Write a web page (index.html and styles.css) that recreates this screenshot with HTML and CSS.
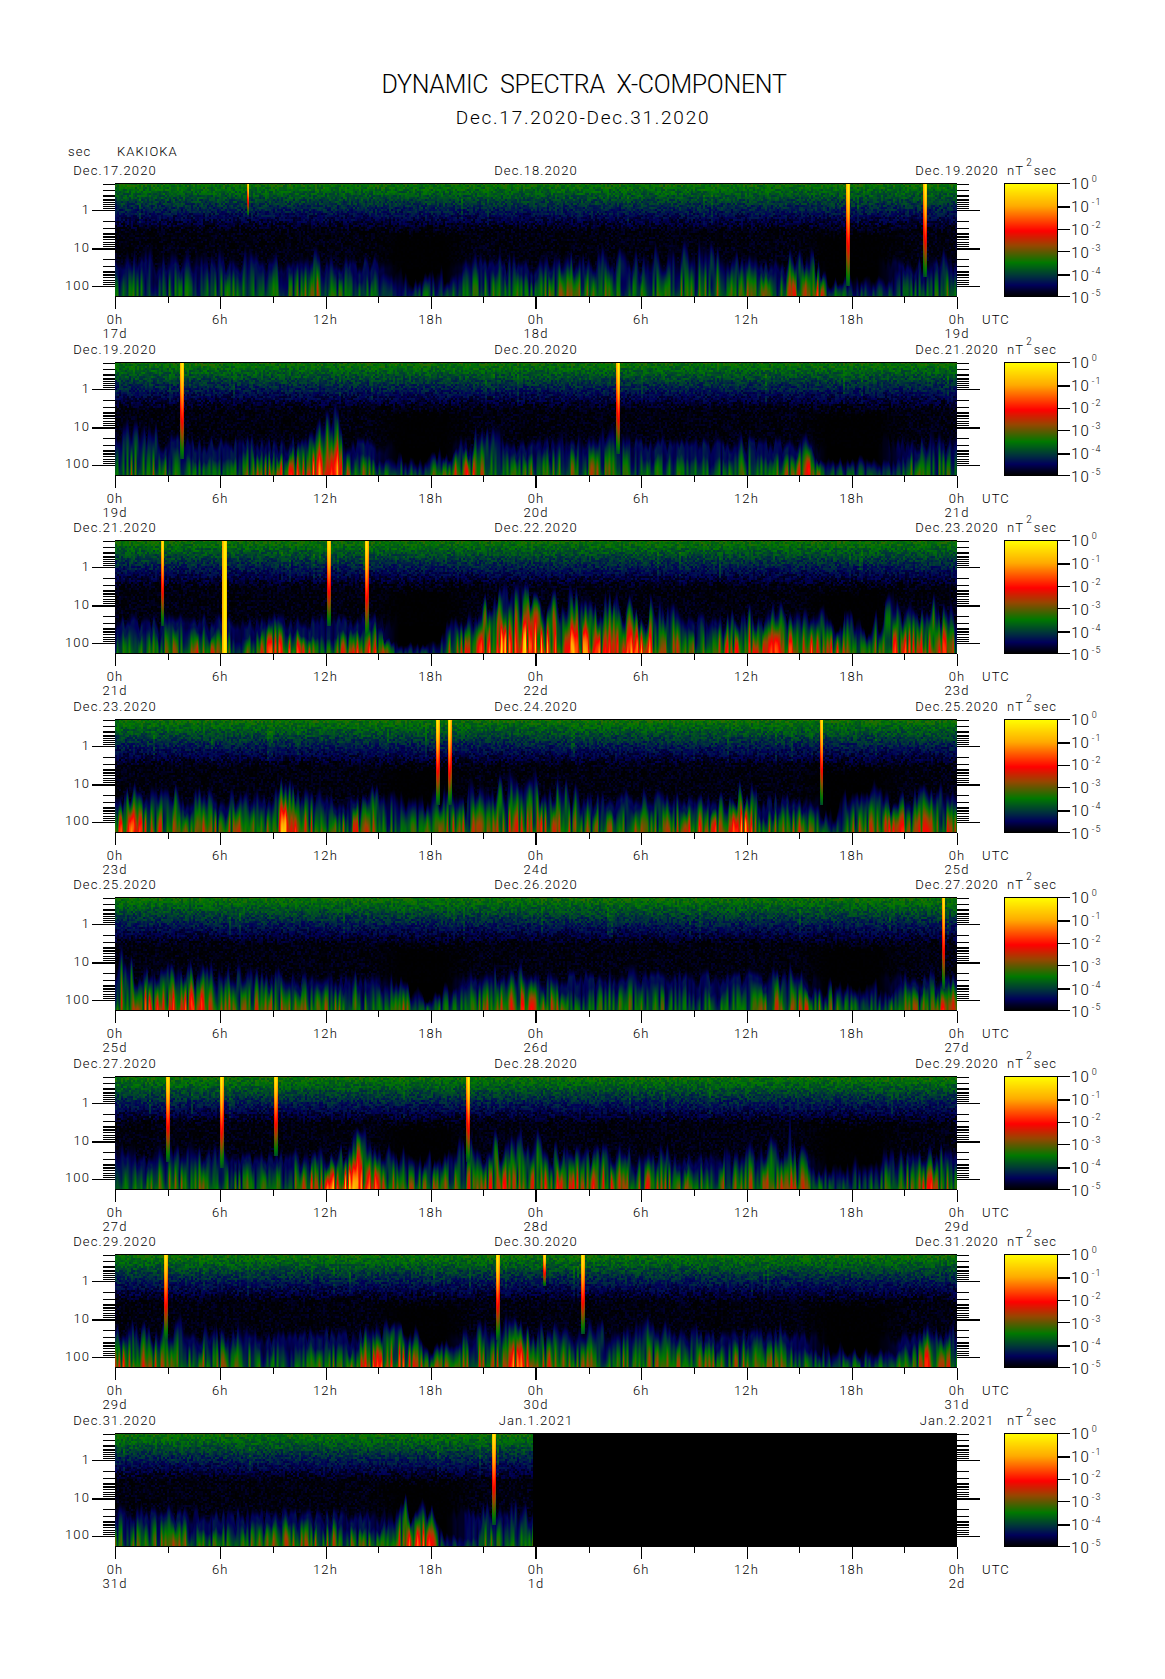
FILE: index.html
```html
<!DOCTYPE html>
<html>
<head>
    <title>Dynamic Spectra X-Component</title>
    <link rel="stylesheet" href="styles.css">
</head>
<body>
    <h1 class="title">DYNAMIC SPECTRA X-COMPONENT</h1>
    <h2 class="subtitle">Dec.17.2020-Dec.31.2020</h2>
    <div class="station"><span class="sec">sec</span><span>KAKIOKA</span></div>

    <section class="panel">
        <div class="dates"><span>Dec.17.2020</span><span>Dec.18.2020</span><span>Dec.19.2020</span><span class="units">nT<sup>2</sup>sec</span></div>
        <div class="plot-row">
            <div class="y-labels"><span>1</span><span>10</span><span>100</span></div>
            <canvas class="ticks-left" width="23" height="114"></canvas>
            <canvas class="spectrum" width="842" height="114"></canvas>
            <canvas class="ticks-right" width="23" height="114"></canvas>
            <canvas class="colorbar" width="66" height="114"></canvas>
            <div class="scale"><span>10<sup>0</sup></span><span>10<sup>-1</sup></span><span>10<sup>-2</sup></span><span>10<sup>-3</sup></span><span>10<sup>-4</sup></span><span>10<sup>-5</sup></span></div>
        </div>
        <canvas class="ticks-bottom" width="844" height="12"></canvas>
        <div class="hours"><span>0h</span><span>6h</span><span>12h</span><span>18h</span><span>0h</span><span>6h</span><span>12h</span><span>18h</span><span>0h</span><span class="utc">UTC</span></div>
        <div class="days"><span>17d</span><span>18d</span><span>19d</span></div>
    </section>

    <section class="panel">
        <div class="dates"><span>Dec.19.2020</span><span>Dec.20.2020</span><span>Dec.21.2020</span><span class="units">nT<sup>2</sup>sec</span></div>
        <div class="plot-row">
            <div class="y-labels"><span>1</span><span>10</span><span>100</span></div>
            <canvas class="ticks-left" width="23" height="114"></canvas>
            <canvas class="spectrum" width="842" height="114"></canvas>
            <canvas class="ticks-right" width="23" height="114"></canvas>
            <canvas class="colorbar" width="66" height="114"></canvas>
            <div class="scale"><span>10<sup>0</sup></span><span>10<sup>-1</sup></span><span>10<sup>-2</sup></span><span>10<sup>-3</sup></span><span>10<sup>-4</sup></span><span>10<sup>-5</sup></span></div>
        </div>
        <canvas class="ticks-bottom" width="844" height="12"></canvas>
        <div class="hours"><span>0h</span><span>6h</span><span>12h</span><span>18h</span><span>0h</span><span>6h</span><span>12h</span><span>18h</span><span>0h</span><span class="utc">UTC</span></div>
        <div class="days"><span>19d</span><span>20d</span><span>21d</span></div>
    </section>

    <section class="panel">
        <div class="dates"><span>Dec.21.2020</span><span>Dec.22.2020</span><span>Dec.23.2020</span><span class="units">nT<sup>2</sup>sec</span></div>
        <div class="plot-row">
            <div class="y-labels"><span>1</span><span>10</span><span>100</span></div>
            <canvas class="ticks-left" width="23" height="114"></canvas>
            <canvas class="spectrum" width="842" height="114"></canvas>
            <canvas class="ticks-right" width="23" height="114"></canvas>
            <canvas class="colorbar" width="66" height="114"></canvas>
            <div class="scale"><span>10<sup>0</sup></span><span>10<sup>-1</sup></span><span>10<sup>-2</sup></span><span>10<sup>-3</sup></span><span>10<sup>-4</sup></span><span>10<sup>-5</sup></span></div>
        </div>
        <canvas class="ticks-bottom" width="844" height="12"></canvas>
        <div class="hours"><span>0h</span><span>6h</span><span>12h</span><span>18h</span><span>0h</span><span>6h</span><span>12h</span><span>18h</span><span>0h</span><span class="utc">UTC</span></div>
        <div class="days"><span>21d</span><span>22d</span><span>23d</span></div>
    </section>

    <section class="panel">
        <div class="dates"><span>Dec.23.2020</span><span>Dec.24.2020</span><span>Dec.25.2020</span><span class="units">nT<sup>2</sup>sec</span></div>
        <div class="plot-row">
            <div class="y-labels"><span>1</span><span>10</span><span>100</span></div>
            <canvas class="ticks-left" width="23" height="114"></canvas>
            <canvas class="spectrum" width="842" height="114"></canvas>
            <canvas class="ticks-right" width="23" height="114"></canvas>
            <canvas class="colorbar" width="66" height="114"></canvas>
            <div class="scale"><span>10<sup>0</sup></span><span>10<sup>-1</sup></span><span>10<sup>-2</sup></span><span>10<sup>-3</sup></span><span>10<sup>-4</sup></span><span>10<sup>-5</sup></span></div>
        </div>
        <canvas class="ticks-bottom" width="844" height="12"></canvas>
        <div class="hours"><span>0h</span><span>6h</span><span>12h</span><span>18h</span><span>0h</span><span>6h</span><span>12h</span><span>18h</span><span>0h</span><span class="utc">UTC</span></div>
        <div class="days"><span>23d</span><span>24d</span><span>25d</span></div>
    </section>

    <section class="panel">
        <div class="dates"><span>Dec.25.2020</span><span>Dec.26.2020</span><span>Dec.27.2020</span><span class="units">nT<sup>2</sup>sec</span></div>
        <div class="plot-row">
            <div class="y-labels"><span>1</span><span>10</span><span>100</span></div>
            <canvas class="ticks-left" width="23" height="114"></canvas>
            <canvas class="spectrum" width="842" height="114"></canvas>
            <canvas class="ticks-right" width="23" height="114"></canvas>
            <canvas class="colorbar" width="66" height="114"></canvas>
            <div class="scale"><span>10<sup>0</sup></span><span>10<sup>-1</sup></span><span>10<sup>-2</sup></span><span>10<sup>-3</sup></span><span>10<sup>-4</sup></span><span>10<sup>-5</sup></span></div>
        </div>
        <canvas class="ticks-bottom" width="844" height="12"></canvas>
        <div class="hours"><span>0h</span><span>6h</span><span>12h</span><span>18h</span><span>0h</span><span>6h</span><span>12h</span><span>18h</span><span>0h</span><span class="utc">UTC</span></div>
        <div class="days"><span>25d</span><span>26d</span><span>27d</span></div>
    </section>

    <section class="panel">
        <div class="dates"><span>Dec.27.2020</span><span>Dec.28.2020</span><span>Dec.29.2020</span><span class="units">nT<sup>2</sup>sec</span></div>
        <div class="plot-row">
            <div class="y-labels"><span>1</span><span>10</span><span>100</span></div>
            <canvas class="ticks-left" width="23" height="114"></canvas>
            <canvas class="spectrum" width="842" height="114"></canvas>
            <canvas class="ticks-right" width="23" height="114"></canvas>
            <canvas class="colorbar" width="66" height="114"></canvas>
            <div class="scale"><span>10<sup>0</sup></span><span>10<sup>-1</sup></span><span>10<sup>-2</sup></span><span>10<sup>-3</sup></span><span>10<sup>-4</sup></span><span>10<sup>-5</sup></span></div>
        </div>
        <canvas class="ticks-bottom" width="844" height="12"></canvas>
        <div class="hours"><span>0h</span><span>6h</span><span>12h</span><span>18h</span><span>0h</span><span>6h</span><span>12h</span><span>18h</span><span>0h</span><span class="utc">UTC</span></div>
        <div class="days"><span>27d</span><span>28d</span><span>29d</span></div>
    </section>

    <section class="panel">
        <div class="dates"><span>Dec.29.2020</span><span>Dec.30.2020</span><span>Dec.31.2020</span><span class="units">nT<sup>2</sup>sec</span></div>
        <div class="plot-row">
            <div class="y-labels"><span>1</span><span>10</span><span>100</span></div>
            <canvas class="ticks-left" width="23" height="114"></canvas>
            <canvas class="spectrum" width="842" height="114"></canvas>
            <canvas class="ticks-right" width="23" height="114"></canvas>
            <canvas class="colorbar" width="66" height="114"></canvas>
            <div class="scale"><span>10<sup>0</sup></span><span>10<sup>-1</sup></span><span>10<sup>-2</sup></span><span>10<sup>-3</sup></span><span>10<sup>-4</sup></span><span>10<sup>-5</sup></span></div>
        </div>
        <canvas class="ticks-bottom" width="844" height="12"></canvas>
        <div class="hours"><span>0h</span><span>6h</span><span>12h</span><span>18h</span><span>0h</span><span>6h</span><span>12h</span><span>18h</span><span>0h</span><span class="utc">UTC</span></div>
        <div class="days"><span>29d</span><span>30d</span><span>31d</span></div>
    </section>

    <section class="panel">
        <div class="dates"><span>Dec.31.2020</span><span>Jan.1.2021</span><span>Jan.2.2021</span><span class="units">nT<sup>2</sup>sec</span></div>
        <div class="plot-row">
            <div class="y-labels"><span>1</span><span>10</span><span>100</span></div>
            <canvas class="ticks-left" width="23" height="114"></canvas>
            <canvas class="spectrum" width="842" height="114"></canvas>
            <canvas class="ticks-right" width="23" height="114"></canvas>
            <canvas class="colorbar" width="66" height="114"></canvas>
            <div class="scale"><span>10<sup>0</sup></span><span>10<sup>-1</sup></span><span>10<sup>-2</sup></span><span>10<sup>-3</sup></span><span>10<sup>-4</sup></span><span>10<sup>-5</sup></span></div>
        </div>
        <canvas class="ticks-bottom" width="844" height="12"></canvas>
        <div class="hours"><span>0h</span><span>6h</span><span>12h</span><span>18h</span><span>0h</span><span>6h</span><span>12h</span><span>18h</span><span>0h</span><span class="utc">UTC</span></div>
        <div class="days"><span>31d</span><span>1d</span><span>2d</span></div>
    </section>

    <script src="script.js"></script>
</body>
</html>
```

FILE: styles.css
```css
body{
    margin: 0;
    background-color: white;
    color: black;
    font-family: "Roboto", "Liberation Sans", sans-serif;
    font-weight: 300;
    font-size: 13px;
    letter-spacing: 1.1px;
}
canvas{
    display: block;
}
.title{
    margin: 0;
    padding: 70px 0 0 3px;
    font-size: 25px;
    font-weight: 300;
    line-height: 30px;
    letter-spacing: -0.3px;
    word-spacing: 6px;
    text-align: center;
}
.subtitle{
    margin: 6px 0 0 0;
    padding-left: 1px;
    font-size: 19px;
    font-weight: 300;
    line-height: 24px;
    letter-spacing: 1.75px;
    text-align: center;
}
.station{
    display: flex;
    height: 18px;
    margin-top: 14px;
    padding-left: 68px;
    line-height: 16px;
}
.sec{
    width: 49px;
}
.panel{
    height: 178.5px;
}
.dates{
    display: flex;
    height: 21px;
    padding-left: 65px;
    line-height: 18px;
}
.dates span{
    width: 100px;
    text-align: center;
    white-space: nowrap;
}
.dates span + span{
    margin-left: 321px;
}
.dates .units{
    margin-left: 0;
    width: 60px;
    text-align: left;
}
.units sup{
    margin: 0 1px 0 2px;
    font-size: 10px;
    line-height: 0;
    vertical-align: 9px;
}
.plot-row{
    display: flex;
    height: 114px;
}
.y-labels{
    display: grid;
    grid-auto-rows: 37.8px;
    align-items: center;
    width: 90px;
    margin-right: 2px;
    padding-top: 8px;
    text-align: right;
}
.spectrum{
    background-color: black;
}
.ticks-right{
    margin-right: 24px;
}
.scale{
    display: grid;
    grid-auto-rows: 22.8px;
    align-items: center;
    height: 0;
    margin: -10px 0 0 1px;
    font-size: 15px;
}
.scale span{
    white-space: nowrap;
}
.scale sup{
    margin-left: 2px;
    font-size: 9px;
    line-height: 0;
    vertical-align: 7px;
}
.ticks-bottom{
    margin-left: 114px;
}
.hours, .days{
    display: flex;
    padding-left: 85px;
    line-height: 15px;
}
.hours{
    margin-top: 3px;
}
.days{
    line-height: 14px;
}
.hours span, .days span{
    width: 60px;
    text-align: center;
}
.hours span + span{
    margin-left: 45.25px;
}
.days span + span{
    margin-left: 361px;
}
.hours .utc{
    margin-left: -5px;
    width: 40px;
    text-align: left;
}
```

FILE: script.js
```js
// [hour, height of the low band, level at the bottom of the plot]
var activity = [
    [[0,.3,.3],[5,.3,.27],[10,.3,.35],[11.5,.3,.44],[13,.28,.3],[15,.22,.24],[16,.16,.18],[17,.12,.18],[18,.2,.3],[19,.15,.22],[20,.27,.3],[24,.28,.3],[24.5,.28,.42],[28,.3,.35],[30,.3,.33],[34,.4,.38],[36,.25,.42],[38,.28,.3],[38.5,.3,.55],[40,.3,.55],[40.7,.12,.3],[42,.12,.2],[44,.12,.22],[45,.3,.28],[47,.32,.33],[48,.32,.35]],
    [[0,.38,.4],[2,.36,.38],[4,.2,.3],[7,.2,.3],[8,.25,.5],[10,.22,.55],[12.5,.5,.68],[13.5,.25,.4],[16,.15,.3],[17.5,.1,.2],[18,.12,.45],[19.5,.2,.5],[20.5,.3,.52],[22,.3,.32],[24,.25,.38],[27,.3,.4],[29,.3,.35],[30,.25,.3],[34,.2,.25],[36,.28,.38],[37,.2,.3],[39.5,.25,.55],[40.5,.12,.25],[44,.1,.22],[45,.2,.35],[46.5,.35,.35],[48,.25,.3]],
    [[0,.3,.28],[2,.25,.3],[3,.25,.42],[5,.2,.5],[7,.2,.3],[9,.25,.58],[10.5,.2,.55],[12,.15,.28],[13.5,.2,.6],[15,.2,.55],[16,.08,.22],[18.5,.08,.2],[19,.3,.45],[20.5,.3,.5],[21.5,.45,.8],[23,.5,.85],[24,.45,.78],[26,.4,.65],[28,.38,.6],[30,.35,.72],[31,.35,.5],[33,.25,.4],[36,.3,.55],[38,.3,.6],[39,.3,.55],[40,.28,.6],[42,.25,.5],[43,.15,.3],[44,.38,.58],[46,.38,.65],[47,.38,.65],[48,.3,.4]],
    [[0,.3,.5],[1,.3,.68],[2,.28,.45],[3,.3,.5],[6,.25,.42],[9,.28,.4],[9.5,.35,.75],[10.5,.28,.5],[13,.28,.42],[14.5,.3,.55],[16,.25,.3],[18,.25,.35],[19,.28,.42],[20.5,.35,.45],[22,.38,.5],[24,.38,.52],[26,.35,.45],[28,.25,.38],[32,.25,.45],[34,.25,.55],[36,.35,.75],[37,.2,.4],[39,.28,.42],[41,.15,.3],[42,.28,.42],[45,.3,.5],[47,.3,.45],[48,.3,.4]],
    [[0,.35,.55],[5,.32,.55],[6,.3,.42],[9,.28,.42],[11,.25,.38],[12,.25,.42],[15,.25,.32],[17,.15,.42],[18,.1,.3],[20,.25,.3],[22,.3,.5],[25,.28,.5],[26,.18,.3],[29,.3,.35],[33,.22,.3],[36,.25,.3],[38.5,.28,.55],[40,.2,.42],[42,.18,.3],[43,.2,.28],[44,.15,.3],[45,.25,.38],[48,.28,.55]],
    [[0,.3,.3],[3,.32,.42],[5,.3,.35],[10,.27,.32],[10.5,.27,.45],[12.5,.27,.7],[14,.4,.75],[16,.25,.42],[18,.22,.42],[19,.28,.42],[20,.35,.42],[22,.38,.5],[24,.35,.5],[26,.3,.5],[30,.3,.5],[33,.25,.42],[37,.3,.4],[38.5,.45,.65],[39.5,.2,.35],[41,.15,.25],[43,.22,.25],[46.5,.3,.55],[48,.25,.35]],
    [[0,.3,.5],[2,.3,.5],[3,.35,.35],[5,.25,.42],[7,.32,.35],[9,.25,.3],[13,.2,.4],[14,.22,.5],[15,.3,.65],[17,.25,.52],[18,.12,.4],[20,.25,.45],[22,.35,.42],[23,.35,.75],[24,.3,.5],[27,.28,.42],[29,.35,.38],[33,.25,.42],[36,.25,.42],[38,.25,.4],[40,.15,.25],[43,.12,.3],[45,.2,.35],[46.5,.32,.55],[48,.25,.35]],
    [[0,.3,.38],[1,.28,.35],[3,.25,.42],[5,.22,.35],[10,.25,.42],[11,.25,.45],[13,.22,.42],[14,.2,.4],[15.5,.2,.35],[16,.3,.55],[17,.32,.6],[17.8,.35,.65],[18.5,.12,.22],[20,.08,.18],[20.5,.12,.22],[21,.3,.4],[22,.28,.3],[23,.3,.4],[24,.3,.4]]
];

// [hour, width in px, y where it fades out]
var spikes = [
    [[7.6,1,.28],[41.8,3,.9],[46.2,3,.82]],
    [[3.83,3,.85],[28.7,3,.8]],
    [[2.72,2,.75],[6.27,4,2],[12.2,3,.75],[14.35,3,.85]],
    [[18.4,3,.75],[19.07,3,.75],[40.3,2,.75]],
    [[47.25,2,.8]],
    [[3.02,3,.75],[6.08,3,.8],[9.17,3,.7],[20.15,3,.75]],
    [[2.9,3,.75],[21.82,3,.75],[24.5,2,.28],[26.67,3,.7]],
    [[21.6,3,.8]]
];

var colorStops = [
    [0,0,0,0],[.05,0,0,40],[.1,0,0,90],[.18,0,50,60],[.3,0,120,0],
    [.45,150,70,0],[.58,255,0,0],[.8,255,170,0],[1,255,255,0]
];

function colorOf(v){
    v = Math.max(0, Math.min(1, v));
    for(var i = 1; i < colorStops.length; i++){
        if(v <= colorStops[i][0]){
            var a = colorStops[i-1], b = colorStops[i];
            var t = (v - a[0]) / (b[0] - a[0]);
            return [a[1]+(b[1]-a[1])*t, a[2]+(b[2]-a[2])*t, a[3]+(b[3]-a[3])*t];
        }
    }
    return [255,255,0];
}

function hash(x, y, seed){
    var s = Math.sin(x*127.1 + y*311.7 + seed*74.7) * 43758.5453;
    return s - Math.floor(s);
}

function smoothNoise(x, y, seed){
    var ix = Math.floor(x), iy = Math.floor(y);
    var fx = x-ix, fy = y-iy;
    fx = fx*fx*(3-2*fx);
    fy = fy*fy*(3-2*fy);
    var top = hash(ix,iy,seed)*(1-fx) + hash(ix+1,iy,seed)*fx;
    var bottom = hash(ix,iy+1,seed)*(1-fx) + hash(ix+1,iy+1,seed)*fx;
    return top*(1-fy) + bottom*fy;
}

function lookup(keys, hour){
    for(var i = 1; i < keys.length; i++){
        if(hour <= keys[i][0]){
            var t = (hour-keys[i-1][0]) / (keys[i][0]-keys[i-1][0]);
            return [keys[i-1][1]+(keys[i][1]-keys[i-1][1])*t, keys[i-1][2]+(keys[i][2]-keys[i-1][2])*t];
        }
    }
    return [keys[keys.length-1][1], keys[keys.length-1][2]];
}

// the two quiet black patches, one each local night
function quiet(hour){
    var a = Math.max(0, 1-Math.abs(hour-17.5)/3);
    var b = Math.max(0, 1-Math.abs(hour-42)/3.2);
    return Math.min(1, Math.max(a,b)*1.8);
}

function drawSpectrum(canvas, index){
    var ctx = canvas.getContext("2d");
    var img = ctx.createImageData(842, 114);
    var keys = activity[index];
    for(var py = 0; py < 114; py++){
        for(var px = 0; px < 842; px++){
            var hour = px/842*48;
            var y = py/114;
            var v = 0;
            if(index < 7 || hour < 23.8){
                var speck = hash(Math.floor(px/2), Math.floor(py/2), index);
                var q = quiet(hour);
                var blip = hash(Math.floor(px/2), 3, index) > .97 && y > .1 && y < .36 ? .05 : 0;
                var upper = .31 - .31*y/.43 + (speck-.5)*.11 + blip;
                var floor = y < .75 ? .06*speck*speck*(1-q*.9) : 0;

                var k = lookup(keys, hour);
                var s1 = smoothNoise(px/2, py/34, index+1);
                var s2 = smoothNoise(px/5, py/80, index+11);
                var fine = smoothNoise(px/2.4, py/100, index+21);
                var height = k[0]*(.55+.7*s2+.65*fine);
                var up = (1-y)/height;
                var low = up < 1 ? k[1]*(.3+1.05*s1)*(1-Math.pow(up, 1.5))*(.85+.15*(1-up)) : 0;
                var hazeTop = .24+.14*fine+.05*s2;
                var haze = 0;
                if(1-y < hazeTop){
                    haze = .13*(1-q)*Math.min(1,(hazeTop-(1-y))/.08)*(.45+.8*s1);
                }
                v = Math.max(upper, floor, low, haze);

                var list = spikes[index];
                for(var i = 0; i < list.length; i++){
                    var cx = list[i][0]/48*842;
                    var dist = Math.abs(px+.5-cx);
                    if(dist <= list[i][1]/2+.5 && y < list[i][2]){
                        var edge = 1 - .2*dist/(list[i][1]/2+.5);
                        var along = list[i][2] > 1 ? 1 : 1-.76*Math.pow(y/list[i][2], 1.3);
                        v = Math.max(v, along*edge);
                    }
                }
            }
            var c = colorOf(v);
            var at = (py*842+px)*4;
            img.data[at] = c[0];
            img.data[at+1] = c[1];
            img.data[at+2] = c[2];
            img.data[at+3] = 255;
        }
    }
    ctx.putImageData(img, 0, 0);
    ctx.fillStyle = "black";
    ctx.fillRect(0, 0, 842, 1);
    ctx.fillRect(0, 113, 842, 1);
}

function drawColorbar(canvas){
    var ctx = canvas.getContext("2d");
    for(var y = 0; y < 114; y++){
        var c = colorOf(1-y/113);
        ctx.fillStyle = "rgb("+Math.round(c[0])+","+Math.round(c[1])+","+Math.round(c[2])+")";
        ctx.fillRect(0, y, 54, 1);
    }
    ctx.fillStyle = "black";
    ctx.fillRect(0, 0, 1, 114);
    ctx.fillRect(53, 0, 1, 114);
    ctx.fillRect(0, 0, 54, 1);
    ctx.fillRect(0, 113, 54, 1);
    for(var i = 0; i < 6; i++){
        ctx.fillRect(54, Math.min(113, Math.round(i*22.8)), 12, i == 1 || i == 4 ? 2 : 1);
    }
}

// period ticks, 1-2-..-9 in each decade, on both sides of the plot
function drawPeriodTicks(canvas, leftSide){
    var ctx = canvas.getContext("2d");
    var decade = 37.8, one = 27;
    ctx.fillStyle = "black";
    for(var d = -1; d < 3; d++){
        for(var n = 1; n < 10; n++){
            var y = one + (d + Math.log(n)/Math.LN10)*decade;
            if(y < -.5 || y > 114) continue;
            var len = n == 1 && d >= 0 ? 23 : 12;
            var thick = n == 1 ? (d == 1 ? 2 : 1) : (n == 2 || n == 3 ? 1 : 2);
            ctx.fillRect(leftSide ? 23-len : 0, Math.round(y), len, thick > 1 && n > 5 ? 1 : thick);
        }
    }
}

function drawHourTicks(canvas){
    var ctx = canvas.getContext("2d");
    ctx.fillStyle = "black";
    for(var h = 0; h <= 48; h += 3){
        var x = Math.round(1 + h/48*842);
        ctx.fillRect(h % 24 == 0 && h % 48 != 0 ? x-1 : x, 0, h % 24 == 0 && h % 48 != 0 ? 2 : 1, h % 6 == 0 ? 12 : 6);
    }
}

document.querySelectorAll(".spectrum").forEach(drawSpectrum);
document.querySelectorAll(".colorbar").forEach(function(c){ drawColorbar(c); });
document.querySelectorAll(".ticks-left").forEach(function(c){ drawPeriodTicks(c, true); });
document.querySelectorAll(".ticks-right").forEach(function(c){ drawPeriodTicks(c, false); });
document.querySelectorAll(".ticks-bottom").forEach(function(c){ drawHourTicks(c); });
```
